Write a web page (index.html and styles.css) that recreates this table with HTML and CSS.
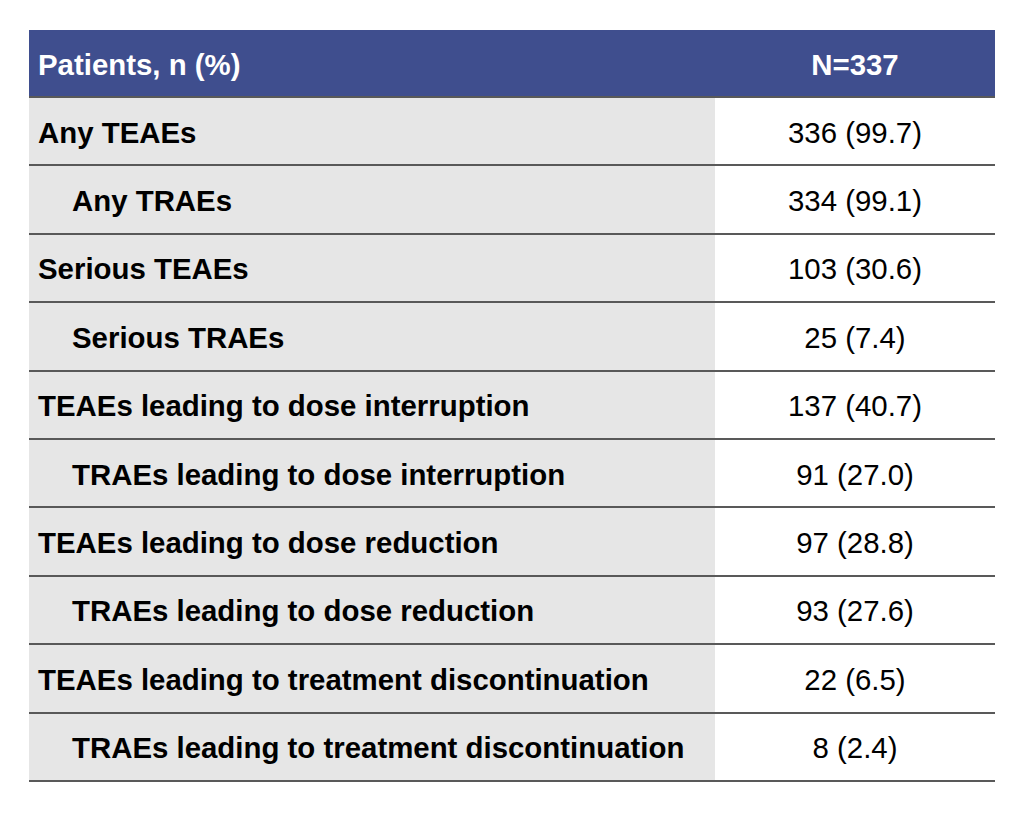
FILE: index.html
```html
<!DOCTYPE html>
<html>
<head>
<meta charset="utf-8">
<link rel="stylesheet" href="styles.css">
</head>
<body>
<div class="table">
  <div class="row head">
    <div class="label">Patients, n (%)</div>
    <div class="value">N=337</div>
  </div>
  <div class="row"><div class="label">Any TEAEs</div><div class="value">336 (99.7)</div></div>
  <div class="row sub"><div class="label">Any TRAEs</div><div class="value">334 (99.1)</div></div>
  <div class="row"><div class="label">Serious TEAEs</div><div class="value">103 (30.6)</div></div>
  <div class="row sub"><div class="label">Serious TRAEs</div><div class="value">25 (7.4)</div></div>
  <div class="row"><div class="label">TEAEs leading to dose interruption</div><div class="value">137 (40.7)</div></div>
  <div class="row sub"><div class="label">TRAEs leading to dose interruption</div><div class="value">91 (27.0)</div></div>
  <div class="row"><div class="label">TEAEs leading to dose reduction</div><div class="value">97 (28.8)</div></div>
  <div class="row sub"><div class="label">TRAEs leading to dose reduction</div><div class="value">93 (27.6)</div></div>
  <div class="row"><div class="label">TEAEs leading to treatment discontinuation</div><div class="value">22 (6.5)</div></div>
  <div class="row sub"><div class="label">TRAEs leading to treatment discontinuation</div><div class="value">8 (2.4)</div></div>
</div>
</body>
</html>
```
FILE: styles.css
```css
html, body {
  margin: 0;
  padding: 0;
  background: #ffffff;
}
body {
  font-family: "Liberation Sans", Arial, sans-serif;
  font-size: 29.4px;
  color: #000000;
}
.table {
  margin: 30px 0 0 29px;
  width: 966px;
  display: flex;
  flex-direction: column;
}
.row {
  display: grid;
  grid-template-columns: 686px 280px;
  height: 68.4px;
  box-sizing: border-box;
  border-bottom: 2px solid #595959;
}
.row.head {
  height: 68px;
  background: #3f4e8e;
  color: #ffffff;
}
.label {
  display: flex;
  align-items: center;
  padding-left: 9px;
  padding-top: 3px;
  font-weight: bold;
  background: #e6e6e6;
}
.head .label {
  background: transparent;
}
.sub .label {
  padding-left: 43px;
}
.value {
  display: flex;
  align-items: center;
  justify-content: center;
  padding-top: 3px;
}
.head .value {
  font-weight: bold;
}
```
